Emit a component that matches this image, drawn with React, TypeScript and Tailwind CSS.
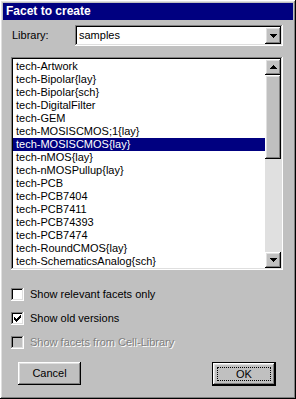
import React, { useState } from 'react';

const raised =
  'shadow-[inset_-1px_-1px_#000000,inset_1px_1px_#ffffff,inset_-2px_-2px_#808080,inset_2px_2px_#dfdfdf]';
const sunken =
  'shadow-[inset_-1px_-1px_#ffffff,inset_1px_1px_#808080,inset_-2px_-2px_#dfdfdf,inset_2px_2px_#000000]';

const ArrowDown = () => (
  <svg width="7" height="4" viewBox="0 0 7 4" shapeRendering="crispEdges">
    <path d="M0 0h7v1H0zM1 1h5v1H1zM2 2h3v1H2zM3 3h1v1H3z" fill="#000" />
  </svg>
);

const ArrowUp = () => (
  <svg width="7" height="4" viewBox="0 0 7 4" shapeRendering="crispEdges">
    <path d="M3 0h1v1H3zM2 1h3v1H2zM1 2h5v1H1zM0 3h7v1H0z" fill="#000" />
  </svg>
);

const Check = () => (
  <svg width="7" height="7" viewBox="0 0 7 7" shapeRendering="crispEdges">
    <path d="M6 0h1v1H6zM5 1h2v1H5zM0 2h1v1H0zM4 2h3v1H4zM0 3h2v1H0zM3 3h3v1H3zM0 4h5v1H0zM1 5h3v1H1zM2 6h1v1H2z" fill="#000" />
  </svg>
);

const facets = [
  'tech-Artwork',
  'tech-Bipolar{lay}',
  'tech-Bipolar{sch}',
  'tech-DigitalFilter',
  'tech-GEM',
  'tech-MOSISCMOS;1{lay}',
  'tech-MOSISCMOS{lay}',
  'tech-nMOS{lay}',
  'tech-nMOSPullup{lay}',
  'tech-PCB',
  'tech-PCB7404',
  'tech-PCB7411',
  'tech-PCB74393',
  'tech-PCB7474',
  'tech-RoundCMOS{lay}',
  'tech-SchematicsAnalog{sch}',
];

const CheckRow = ({ label, checked, disabled }: { label: string; checked?: boolean; disabled?: boolean }) => (
  <div className="flex items-center h-[13px]">
    <div
      className={`w-[13px] h-[13px] flex items-center justify-center ${sunken} ${
        disabled ? 'bg-[#c0c0c0]' : 'bg-white'
      }`}
    >
      {checked && <Check />}
    </div>
    <span
      className={`ml-[6px] ${
        disabled ? 'text-[#808080] [text-shadow:1px_1px_0_#ffffff]' : 'text-black'
      }`}
    >
      {label}
    </span>
  </div>
);

export default function App() {
  const [selected, setSelected] = useState(6);

  return (
    <div
      className={`w-[296px] h-[399px] bg-[#c0c0c0] p-[3px] flex flex-col text-[11px] leading-[13px] text-black ${raised}`}
      style={{ fontFamily: '"Liberation Sans", Arial, sans-serif' }}
    >
      {/* title */}
      <div className="h-[17px] bg-[#000080] flex items-center pl-[3px]">
        <span className="text-white font-bold text-[12px]">Facet to create</span>
      </div>

      {/* library */}
      <div className="flex items-center mt-[5px] h-[21px]">
        <span className="ml-[9px] w-[63px]">Library:</span>
        <div className={`w-[208px] h-[21px] bg-white flex items-center p-[2px] ${sunken}`}>
          <span className="flex-1 pl-[2px]">samples</span>
          <div className={`w-[16px] h-[17px] bg-[#c0c0c0] flex items-center justify-center ${raised}`}>
            <ArrowDown />
          </div>
        </div>
      </div>

      {/* list */}
      <div className={`ml-[8px] mt-[11px] w-[272px] h-[213px] bg-white p-[2px] flex ${sunken}`}>
        <div className="flex-1 pt-[1px]">
          {facets.map((f, i) => (
            <div
              key={f}
              onClick={() => setSelected(i)}
              className={`h-[13px] pl-[3px] whitespace-nowrap ${
                selected === i ? 'bg-[#000080] text-white' : ''
              }`}
            >
              {f}
            </div>
          ))}
        </div>
        <div className="w-[16px] flex flex-col bg-[#e0e0e0]">
          <div className={`h-[16px] bg-[#c0c0c0] flex items-center justify-center ${raised}`}>
            <ArrowUp />
          </div>
          <div className={`h-[84px] bg-[#c0c0c0] ${raised}`} />
          <div className="flex-1" />
          <div className={`h-[16px] bg-[#c0c0c0] flex items-center justify-center ${raised}`}>
            <ArrowDown />
          </div>
        </div>
      </div>

      {/* options */}
      <div className="ml-[8px] mt-[18px] flex flex-col gap-[11px]">
        <CheckRow label="Show relevant facets only" />
        <CheckRow label="Show old versions" checked />
        <CheckRow label="Show facets from Cell-Library" disabled />
      </div>

      {/* buttons */}
      <div className="flex justify-between mt-[13px] ml-[15px] mr-[17px]">
        <button className={`w-[63px] h-[23px] bg-[#c0c0c0] ${raised}`}>Cancel</button>
        <div className="w-[64px] h-[24px] border border-black">
          <button className={`w-full h-full bg-[#c0c0c0] flex items-center justify-center p-[4px] ${raised}`}>
            <span className="w-full h-full border border-dotted border-black flex items-center justify-center">
              OK
            </span>
          </button>
        </div>
      </div>
    </div>
  );
}
